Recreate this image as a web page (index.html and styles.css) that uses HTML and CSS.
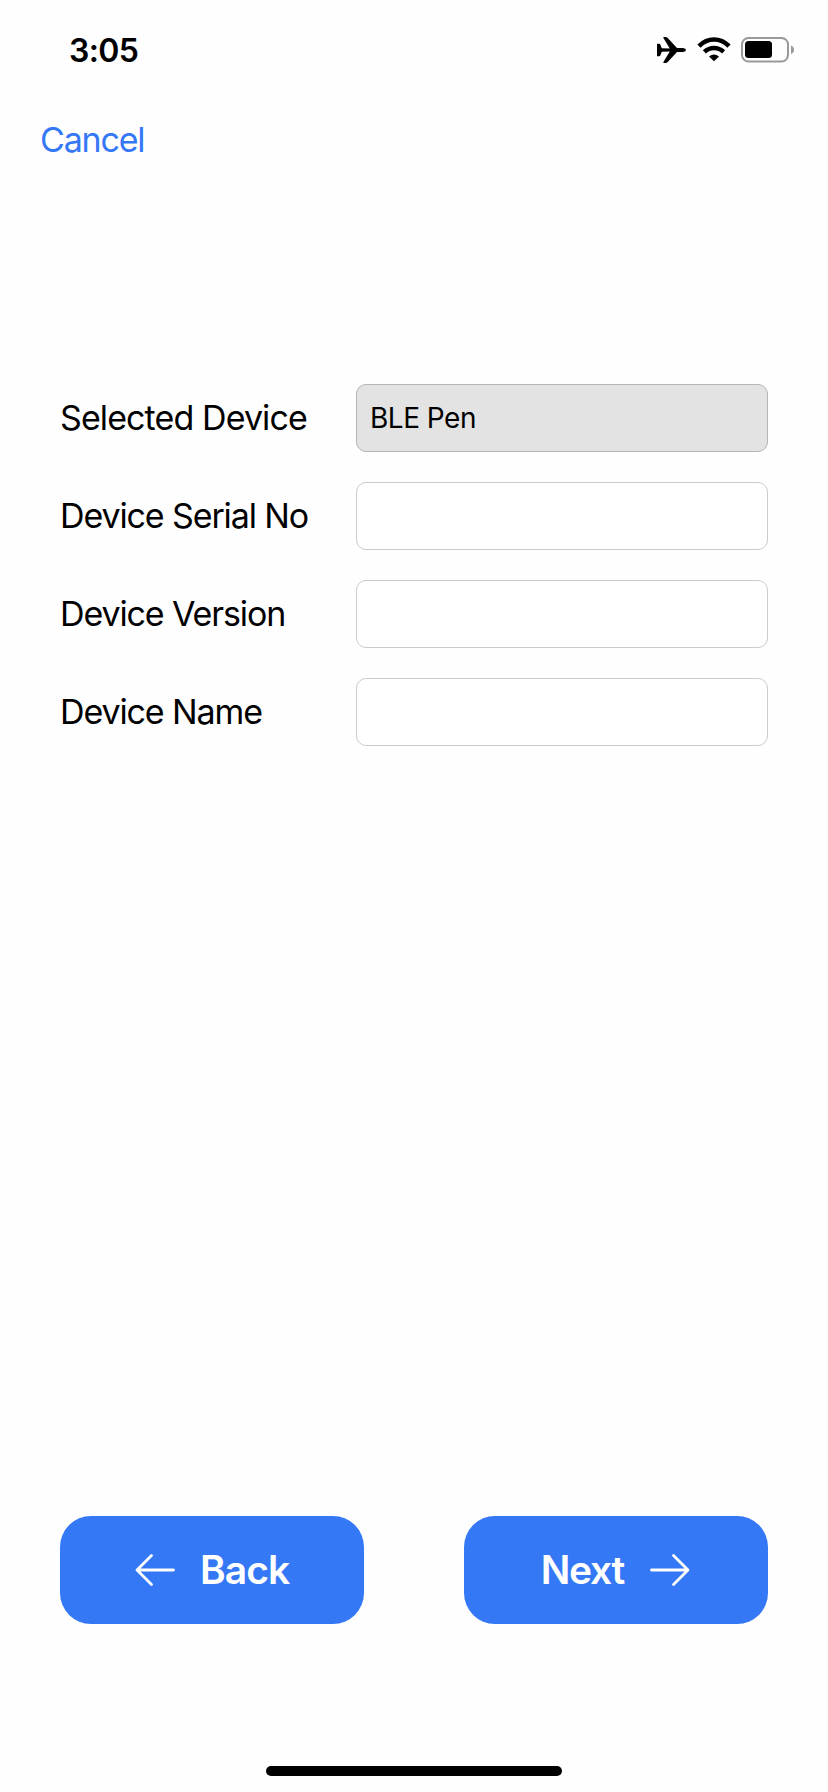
FILE: index.html
```html
<!DOCTYPE html>
<html lang="en">
<head>
<meta charset="utf-8">
<title>Device setup</title>
<link rel="stylesheet" href="styles.css">
</head>
<body>
<div class="screen">
  <header class="status">
    <span class="time">3:05</span>
    <div class="status-icons">
      <svg class="plane" width="30" height="28" viewBox="0 0 30 28"><path d="M0 6.700h2.200q.7 0 1.100.7l1.500 3.900 8 .2L6.400 1Q6 0 7 0h2q.8 0 1.500.8l9.500 10.200h6q3 .3 3 2t-3 2h-6l-9.500 10.200q-.7.800-1.500.8H7q-1 0-.6-1l6.400-10.500-8 .2-1.500 3.900q-.4.700-1.100.700H0z"/></svg>
      <svg class="wifi" width="34" height="26" viewBox="0 0 34 26" fill="none" stroke="#000"><path d="M2 9.100Q8.600 2.500 17 2.500T32 9.100" stroke-width="4.600"/><path d="M7.400 14.900Q11.600 11 17 11t9.600 3.900" stroke-width="4.600"/><path d="M12 19.500Q17 15.400 22 19.500L17 24.300z" fill="#000" stroke="none"/></svg>
      <svg class="battery" width="54" height="26" viewBox="0 0 54 26"><rect x="1" y="1" width="46" height="23.500" rx="6.500" fill="none" stroke="#999" stroke-width="2"/><rect x="4" y="4" width="27" height="17" rx="3.500"/><path d="M50 8.500q3 1.200 3 4.200t-3 4.300z" fill="#999"/></svg>
    </div>
  </header>
  <nav class="nav"><a class="cancel">Cancel</a></nav>
  <main class="form">
    <div class="row"><label class="label selected">Selected Device</label><div class="field filled">BLE Pen</div></div>
    <div class="row"><label class="label">Device Serial No</label><div class="field"></div></div>
    <div class="row"><label class="label">Device Version</label><div class="field"></div></div>
    <div class="row"><label class="label">Device Name</label><div class="field"></div></div>
  </main>
  <footer class="actions">
    <div class="button back"><svg width="40" height="34" viewBox="0 0 40 34"><path d="M38.500 17H2M16.500 2.500L2 17l14.500 14.500"/></svg><span>Back</span></div>
    <div class="button next"><span>Next</span><svg width="40" height="34" viewBox="0 0 40 34"><path d="M1.500 17H38M23.500 2.500L38 17 23.500 31.500"/></svg></div>
  </footer>
  <div class="home"></div>
</div>
</body>
</html>
```
FILE: styles.css
```css
* { box-sizing: border-box; }
body { margin: 0; background: #fff; }
.screen {
  width: 828px;
  height: 1792px;
  display: flex;
  flex-direction: column;
  background: #fefefe;
  color: #000;
  font-family: Inter, "Liberation Sans", sans-serif;
}
.status {
  height: 98px;
  padding: 29px 33px 0 69px;
  display: flex;
  justify-content: space-between;
}
.time { font-size: 32px; line-height: 43px; font-weight: 600; letter-spacing: -0.6px; }
.status-icons { display: flex; padding-top: 8px; }
.plane { margin-right: 10px; }
.wifi { margin-right: 10px; }
.nav { height: 286px; padding: 20px 0 0 40px; }
.cancel { font-size: 34px; line-height: 44px; letter-spacing: -1.2px; color: #3478f6; }
.form { display: flex; flex-direction: column; gap: 30px; padding: 0 60px; }
.row { display: flex; height: 68px; align-items: center; }
.label { width: 296px; font-size: 34px; line-height: 44px; letter-spacing: -1.12px; white-space: nowrap; }
.selected { letter-spacing: -0.9px; }
.field {
  width: 412px;
  height: 68px;
  border: 1px solid #cbcbcb;
  border-radius: 10px;
  background: #fff;
  padding: 0 13px;
  font-size: 28px;
  line-height: 67px;
  letter-spacing: -0.5px;
}
.filled { background: #e3e3e3; border-color: #b5b5b5; }
.actions { display: flex; justify-content: space-between; margin-top: auto; padding: 0 60px; }
.button {
  width: 304px;
  height: 108px;
  border-radius: 31px;
  background: #3478f6;
  color: #fff;
  display: flex;
  align-items: center;
  font-size: 39px;
  line-height: 48px;
  font-weight: 600;
}
.button span { padding-bottom: 1px; }
.back { padding-left: 75px; gap: 25px; letter-spacing: -0.9px; }
.next { padding-right: 78px; gap: 26px; justify-content: flex-end; letter-spacing: -1.3px; }
.button svg { flex: none; fill: none; stroke: #fff; stroke-width: 2.8; stroke-linecap: round; stroke-linejoin: round; }
.home { width: 296px; height: 10px; border-radius: 5px; background: #000; margin: 142px auto 16px; }
```
